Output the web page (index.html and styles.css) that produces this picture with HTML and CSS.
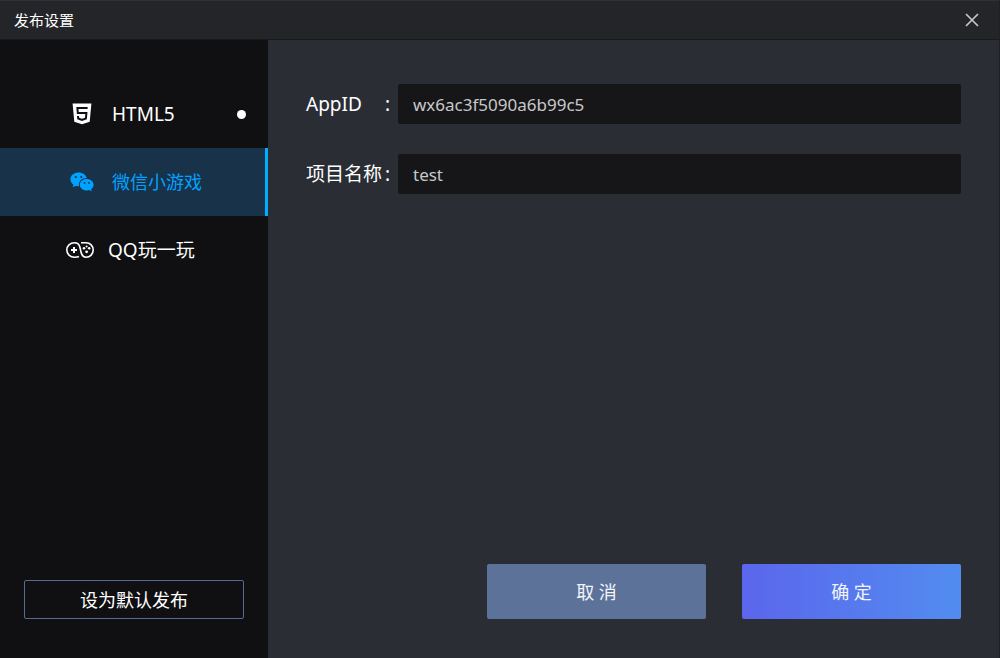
FILE: index.html
```html
<!DOCTYPE html>
<html lang="zh-CN">
<head>
<meta charset="utf-8">
<meta name="viewport" content="width=device-width, initial-scale=1">
<title>发布设置</title>
<link rel="stylesheet" href="styles.css">
</head>
<body>
<div class="dialog">
  <header class="titlebar">
    <h1 class="title">发布设置</h1>
    <button class="close" type="button" aria-label="关闭">
      <svg width="14" height="14" viewBox="0 0 14 14" fill="none" stroke="currentColor" stroke-width="1.7"><path d="M1 1l12 12M13 1L1 13"/></svg>
    </button>
  </header>
  <div class="body">
    <aside class="sidebar">
      <nav class="nav">
        <button class="nav-item" type="button">
          <span class="nav-icon">
            <svg width="20" height="22" viewBox="0 0 20 22"><path fill="#fff" d="M.6 .5h18.800l-1.700 18.300L10 21.300l-7.700-2.500z"/><path fill="none" stroke="#101012" stroke-width="2" d="M15.600 5H5.400l.4 5h8.600l-.5 5.500L10 16.900l-3.800-1.400-.2-2.500"/></svg>
          </span>
          <span class="nav-label">HTML5</span>
          <span class="dot"></span>
        </button>
        <button class="nav-item active" type="button" aria-current="page">
          <span class="nav-icon">
            <svg width="24" height="20" viewBox="0 0 24 20"><path fill="#00a2ff" d="M8.500 .5C3.900.5.400 3.500.400 7.300c0 2.200 1.200 4 3 5.300l-.7 2.600 3-1.500c1.100.3 2.200.5 3.400.4C8.200 9.400 11.800 6 16.700 6 15.900 2.800 12.600.5 8.500.5z"/><path fill="#00a2ff" d="M16.700 6.900c-3.900 0-6.900 2.600-6.900 5.800s3 5.800 6.900 5.800c.9 0 1.700-.1 2.500-.4l2.500 1.400-.6-2.300c1.500-1.100 2.500-2.700 2.500-4.500 0-3.200-3.100-5.800-6.900-5.800z"/><g fill="#18324a"><circle cx="5.800" cy="5" r="1.050"/><circle cx="11.300" cy="5" r="1.050"/><circle cx="14.500" cy="10.900" r=".9"/><circle cx="19" cy="10.900" r=".9"/></g></svg>
          </span>
          <span class="nav-label">微信小游戏</span>
        </button>
        <button class="nav-item" type="button">
          <span class="nav-icon wide">
            <svg width="28" height="16" viewBox="0 0 28 16" fill="none" stroke="#fff" stroke-width="1.600"><path d="M13 14.600c-1 .4-2.400.6-4.500.6C4 15.200.8 12 .8 8S4 .8 8.500.8c3.300 0 4.800 1.500 5.500 4.700l1 4.500c.7 3.400 2.100 5.200 5 5.200 4.200 0 7.200-3.200 7.200-7.200S24.200.8 20 .8h-5"/><path stroke-width="2" d="M5 8h6M8 5v6"/><g fill="#fff" stroke="none"><circle cx="18" cy="6.300" r="1.250"/><circle cx="20.600" cy="4.500" r="1"/><circle cx="23.200" cy="6.300" r="1.250"/><circle cx="20.600" cy="9.800" r="1.400"/></g></svg>
          </span>
          <span class="nav-label">QQ玩一玩</span>
        </button>
      </nav>
      <button class="default-btn" type="button">设为默认发布</button>
    </aside>
    <form class="content">
      <div class="field">
        <label class="field-label" for="appid"><span>AppID</span><span>:</span></label>
        <input class="field-input" id="appid" type="text" value="wx6ac3f5090a6b99c5">
      </div>
      <div class="field">
        <label class="field-label" for="project"><span>项目名称</span><span>:</span></label>
        <input class="field-input" id="project" type="text" value="test">
      </div>
      <div class="actions">
        <button class="action cancel" type="button">取 消</button>
        <button class="action confirm" type="submit">确 定</button>
      </div>
    </form>
  </div>
</div>
</body>
</html>
```
FILE: styles.css
```css
* {
  box-sizing: border-box;
}

body {
  margin: 0;
  background: #2b2d35;
  color: #fff;
  font: 18px/24px "Noto Sans", "Noto Sans CJK SC", sans-serif;
}

button,
input {
  margin: 0;
  padding: 0;
  border: 0;
  background: none;
  color: inherit;
  font: inherit;
}

button {
  cursor: pointer;
}

svg {
  display: block;
}

.dialog {
  display: flex;
  flex-direction: column;
  min-height: 100vh;
  border-right: 1px solid #1f2024;
}

.titlebar {
  display: flex;
  align-items: center;
  justify-content: space-between;
  height: 40px;
  padding: 0 20px 0 14px;
  border-top: 1px solid #303136;
  border-bottom: 1px solid #18191b;
  background: #242529;
}

.title {
  margin: 0;
  font-size: 15px;
  font-weight: 400;
}

.close {
  color: #c6c6c8;
}

.body {
  display: flex;
  flex: 1;
}

.sidebar {
  display: flex;
  flex-direction: column;
  justify-content: space-between;
  width: 268px;
  padding: 40px 0 39px;
  background: #101012;
}

.nav {
  display: flex;
  flex-direction: column;
}

.nav-item {
  display: flex;
  align-items: center;
  gap: 14px;
  height: 68px;
  padding: 0 19px 0 66px;
  border-right: 3px solid transparent;
  font-size: 19px;
  text-align: left;
}

.nav-item.active {
  border-right-color: #00aeff;
  background: #18324a;
  color: #00a2ff;
  font-size: 18px;
}

.nav-icon {
  display: flex;
  justify-content: center;
  width: 32px;
}

.nav-icon.wide {
  width: 28px;
}

.nav-label {
  flex: 1;
}

.dot {
  width: 9px;
  height: 9px;
  border-radius: 50%;
  background: #fff;
}

.default-btn {
  height: 39px;
  margin: 0 24px;
  border: 1px solid #536b96;
  border-radius: 2px;
}

.content {
  display: flex;
  flex: 1;
  flex-direction: column;
  gap: 30px;
  padding: 44px 38px 39px;
  background: #2b2d35;
}

.field {
  display: flex;
  align-items: center;
  gap: 8px;
}

.field-label {
  display: flex;
  justify-content: space-between;
  width: 84px;
  font-size: 19px;
}

.field-input {
  flex: 1;
  min-width: 0;
  height: 40px;
  padding: 0 15px;
  border-radius: 2px;
  background: #161618;
  color: #c8c8c8;
  font-size: 17px;
}

.actions {
  display: flex;
  justify-content: flex-end;
  gap: 36px;
  margin-top: auto;
}

.action {
  width: 219px;
  height: 55px;
  border-radius: 2px;
  color: #f2f4fa;
}

.cancel {
  background: #5c7299;
}

.confirm {
  background: linear-gradient(90deg, #5b66ec, #528cf0);
}
```
